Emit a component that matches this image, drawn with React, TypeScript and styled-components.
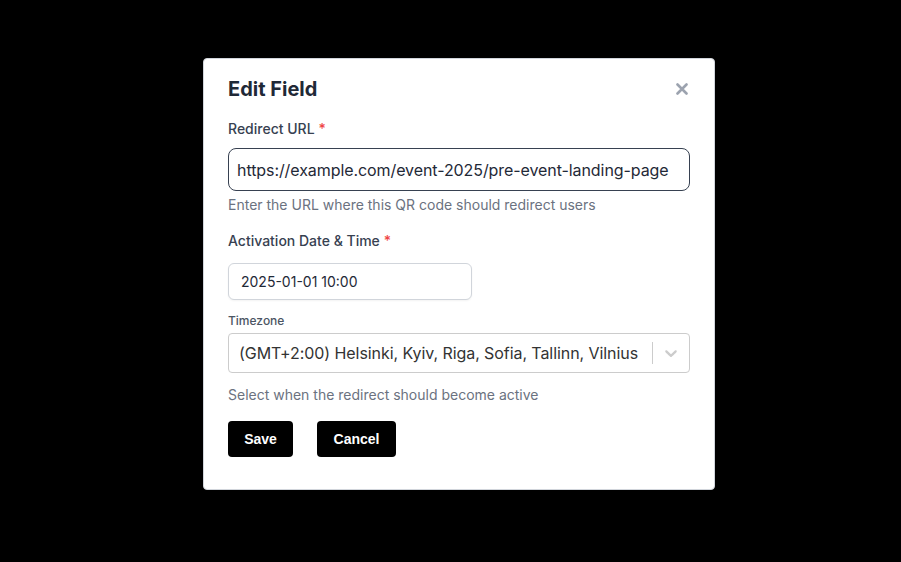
import React, { useState } from 'react';
import styled, { createGlobalStyle } from 'styled-components';

const GlobalStyle = createGlobalStyle`
  html, body {
    margin: 0;
    padding: 0;
    background: #000;
  }
  body {
    font-family: Inter, 'Noto Sans', sans-serif;
  }
  * {
    box-sizing: border-box;
  }
`;

const Overlay = styled.div`
  min-height: 562px;
  display: flex;
  justify-content: center;
  align-items: flex-start;
  padding: 58px 0 0 17px;
  background: #000;
`;

const Modal = styled.div`
  width: 512px;
  background: #fff;
  border: 1px solid #d1d5db;
  border-radius: 4px;
  padding: 16px 24px 32px;
  display: flex;
  flex-direction: column;
`;

const Header = styled.div`
  display: flex;
  align-items: center;
  justify-content: space-between;
  height: 28px;
  margin-bottom: 16px;
`;

const Title = styled.h2`
  margin: 0;
  font-size: 20px;
  line-height: 28px;
  font-weight: 700;
  color: #1f2937;
`;

const CloseButton = styled.button`
  border: none;
  background: none;
  padding: 0;
  width: 16px;
  height: 16px;
  display: flex;
  align-items: center;
  justify-content: center;
  cursor: pointer;
  color: #9ca3af;
`;

const Label = styled.label<{ $gap?: number }>`
  display: block;
  font-size: 14px;
  line-height: 20px;
  font-weight: 500;
  color: #374151;
  margin-bottom: ${p => p.$gap ?? 9}px;
`;

const Required = styled.span`
  color: #ef4444;
  margin-left: 4px;
`;

const SmallLabel = styled.label`
  display: block;
  font-size: 12px;
  line-height: 16px;
  font-weight: 500;
  color: #4b5563;
  margin: 13px 0 4px;
`;

const UrlInput = styled.input`
  width: 100%;
  height: 43px;
  border: 1px solid #374151;
  border-radius: 8px;
  padding: 0 8px;
  font-family: Inter, sans-serif;
  font-size: 16px;
  letter-spacing: -0.08px;
  color: #1f2937;
  outline: none;
`;

const DateInput = styled.input`
  width: 244px;
  height: 37px;
  border: 1px solid #d1d5db;
  border-radius: 6px;
  padding: 0 12px;
  font-family: Inter, sans-serif;
  font-size: 14px;
  color: #1f2937;
  box-shadow: 0 1px 2px rgba(0, 0, 0, 0.05);
  outline: none;
`;

const Help = styled.p<{ $top: number; $bottom: number }>`
  margin: ${p => p.$top}px 0 ${p => p.$bottom}px;
  font-size: 14px;
  line-height: 20px;
  color: #6b7280;
`;

const SelectBox = styled.div`
  height: 40px;
  border: 1px solid #ccc;
  border-radius: 4px;
  display: flex;
  align-items: center;
`;

const SelectValue = styled.div`
  flex: 1;
  padding: 2px 8px;
  font-size: 16px;
  letter-spacing: -0.07px;
  color: hsl(0, 0%, 20%);
  margin-left: 2px;
  white-space: nowrap;
  overflow: hidden;
`;

const Separator = styled.span`
  align-self: stretch;
  width: 1px;
  margin: 8px 0;
  background: #ccc;
`;

const Indicator = styled.div`
  padding: 8px;
  display: flex;
  color: #ccc;
`;

const Actions = styled.div`
  display: flex;
  gap: 24px;
  margin-top: 16px;
`;

const Button = styled.button<{ $width: number }>`
  height: 36px;
  width: ${p => p.$width}px;
  padding: 0;
  border: none;
  border-radius: 4px;
  background: #000;
  color: #fff;
  font-family: 'Liberation Sans', Arial, sans-serif;
  font-size: 14px;
  font-weight: 700;
  cursor: pointer;
`;

export default function App() {
  const [url, setUrl] = useState('https://example.com/event-2025/pre-event-landing-page');
  const [date, setDate] = useState('2025-01-01 10:00');

  return (
    <>
      <GlobalStyle />
      <Overlay>
        <Modal>
          <Header>
            <Title>Edit Field</Title>
            <CloseButton aria-label="Close">
              <svg width="12" height="12" viewBox="0 0 12 12">
                <path d="M1.5 1.5l9 9M10.5 1.5l-9 9" stroke="currentColor" strokeWidth="2.6" strokeLinecap="round" />
              </svg>
            </CloseButton>
          </Header>

          <Label>
            Redirect URL<Required>*</Required>
          </Label>
          <UrlInput value={url} onChange={e => setUrl(e.target.value)} />
          <Help $top={4} $bottom={16}>Enter the URL where this QR code should redirect users</Help>

          <Label $gap={12}>
            Activation Date &amp; Time<Required>*</Required>
          </Label>
          <DateInput value={date} onChange={e => setDate(e.target.value)} />

          <SmallLabel>Timezone</SmallLabel>
          <SelectBox>
            <SelectValue>(GMT+2:00) Helsinki, Kyiv, Riga, Sofia, Tallinn, Vilnius</SelectValue>
            <Separator />
            <Indicator>
              <svg width="20" height="20" viewBox="0 0 20 20" fill="currentColor">
                <path d="M4.516 7.548c0.436-0.446 1.043-0.481 1.576 0l3.908 3.747 3.908-3.747c0.533-0.481 1.141-0.446 1.574 0 0.436 0.445 0.408 1.197 0 1.615-0.406 0.418-4.695 4.502-4.695 4.502-0.217 0.223-0.502 0.335-0.787 0.335s-0.57-0.112-0.789-0.335c0 0-4.287-4.084-4.695-4.502s-0.436-1.17 0-1.615z" />
              </svg>
            </Indicator>
          </SelectBox>
          <Help $top={12} $bottom={0}>Select when the redirect should become active</Help>

          <Actions>
            <Button $width={65}>Save</Button>
            <Button $width={79}>Cancel</Button>
          </Actions>
        </Modal>
      </Overlay>
    </>
  );
}
